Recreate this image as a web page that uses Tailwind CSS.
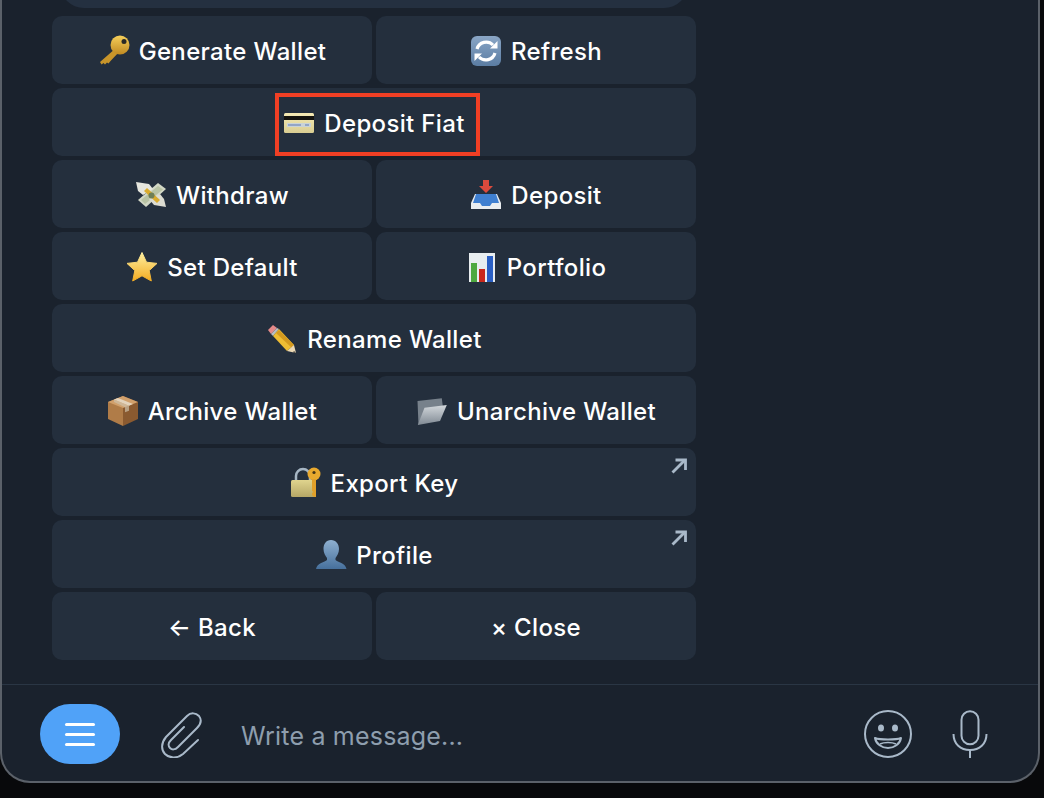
<!DOCTYPE html>
<html lang="en">
<head>
  <meta charset="UTF-8" />
  <title>Wallet menu</title>
  <script src="https://cdn.jsdelivr.net/npm/@tailwindcss/browser@4"></script>
</head>
<body class="bg-black">
  <div class="w-[1044px] h-[798px] overflow-hidden bg-[#08090b] font-['Inter','Liberation_Sans',sans-serif]">
    <!-- telegram window -->
    <div class="w-[1040px] h-[783px] flex flex-col bg-[#1a222d] border-l-2 border-r-2 border-b-2 border-[#5b6169] rounded-b-[30px] overflow-hidden">

      <!-- keyboard area -->
      <div class="h-[684px] pl-[50px] w-[694px] shrink-0">
        <div class="h-[40px] -mt-[32px] mb-[8px] mx-[8px] bg-[#243040] rounded-b-[24px]"></div>

        <div class="grid grid-cols-2 gap-[4px] text-white text-[24px] font-medium leading-none tracking-[0.34px]">
          <!-- Generate Wallet / Refresh -->
          <button class="h-[68px] pt-[4px] rounded-[10px] bg-[#242f3d] flex items-center justify-center gap-[9px]">
            <svg class="w-[32px] h-[32px] mb-[2px]" viewBox="0 0 32 32">
              <defs><linearGradient id="keyBg" x1="0" y1="0" x2="0" y2="1"><stop offset="0" stop-color="#f6cf5a"/><stop offset="1" stop-color="#c08a22"/></linearGradient></defs>
              <path d="M18 13 2 27l1.500 2.500 2-1.500 1.500 1.500 2-2 1.500 1 2-2.500L21 17z" fill="#c8952a"/>
              <circle cx="22" cy="10" r="9.500" fill="url(#keyBg)"/>
              <circle cx="26" cy="6.500" r="2.500" fill="#2a2a26"/>
            </svg>
            <span>Generate Wallet</span>
          </button>
          <button class="h-[68px] pt-[4px] rounded-[10px] bg-[#242f3d] flex items-center justify-center gap-[9px]">
            <svg class="w-[32px] h-[32px] mb-[2px]" viewBox="0 0 32 32">
              <defs><linearGradient id="refreshBg" x1="0" y1="0" x2="0" y2="1"><stop offset="0" stop-color="#8aa6c6"/><stop offset="1" stop-color="#5b7da3"/></linearGradient></defs>
              <rect x="1" y="1" width="30" height="30" rx="6" fill="url(#refreshBg)"/>
              <path d="M7 14a9.500 9.500 0 0 1 16-4" fill="none" stroke="#fff" stroke-width="3.200"/>
              <path d="M20 13.500h7.500V6z" fill="#fff"/>
              <path d="M25 18a9.500 9.500 0 0 1-16 4" fill="none" stroke="#fff" stroke-width="3.200"/>
              <path d="M12 18.500H4.500V26z" fill="#fff"/>
            </svg>
            <span>Refresh</span>
          </button>

          <!-- Deposit Fiat, highlighted with a red box -->
          <button class="relative col-span-2 h-[68px] pt-[4px] rounded-[10px] bg-[#242f3d] flex items-center justify-center gap-[9px]">
            <svg class="w-[32px] h-[32px] mb-[2px]" viewBox="0 0 32 32">
              <defs><linearGradient id="cardBg" x1="0" y1="0" x2="0" y2="1"><stop offset="0" stop-color="#f5eab4"/><stop offset="1" stop-color="#d9cd92"/></linearGradient></defs>
              <rect x="1" y="6" width="30" height="20" rx="1.500" fill="url(#cardBg)"/>
              <rect x="1" y="9" width="30" height="4" fill="#15140f"/>
              <rect x="4" y="16" width="24" height="4" fill="#c9d3d8"/>
              <path d="M5 18h13M22 18h4" stroke="#5e78b4" stroke-width="1.200"/>
            </svg>
            <span>Deposit Fiat</span>
            <span class="absolute left-[223px] top-[5px] w-[205px] h-[63px] border-[4px] border-[#f13f24]"></span>
          </button>

          <!-- Withdraw / Deposit -->
          <button class="h-[68px] pt-[4px] rounded-[10px] bg-[#242f3d] flex items-center justify-center gap-[9px]">
            <svg class="w-[32px] h-[32px] mb-[2px]" viewBox="0 0 32 32">
              <path d="M3 21 23 4l8 6-20 18z" fill="#d3d8c6"/>
              <path d="M6 21 23 7l5 3.500L10 25z" fill="#b9c3a4"/>
              <path d="M1 3l13 2 4 5-10 6-5-4z" fill="#e6e6de"/>
              <path d="M31 28l-12-2-5-6 11-5 4 5z" fill="#dcdcd2"/>
              <path d="M9 12l13 12 3-3L12 9z" fill="#d9ab2e"/>
              <circle cx="16.500" cy="16.500" r="3" fill="#6f7f55"/>
            </svg>
            <span>Withdraw</span>
          </button>
          <button class="h-[68px] pt-[4px] rounded-[10px] bg-[#242f3d] flex items-center justify-center gap-[9px]">
            <svg class="w-[32px] h-[32px] mb-[2px]" viewBox="0 0 32 32">
              <path d="M5 15h22l4 9v6H1v-6z" fill="#e9edf0"/>
              <path d="M6 15h20l3 9h-7l-2 3h-8l-2-3H3z" fill="#3f7fd0"/>
              <path d="M13 1h6v6h4l-7 7-7-7h4z" fill="#dc4a3d"/>
            </svg>
            <span>Deposit</span>
          </button>

          <!-- Set Default / Portfolio -->
          <button class="h-[68px] pt-[4px] rounded-[10px] bg-[#242f3d] flex items-center justify-center gap-[9px]">
            <svg class="w-[32px] h-[32px] mb-[2px]" viewBox="0 0 32 32">
              <defs><linearGradient id="starBg" x1="0" y1="0" x2="0" y2="1"><stop offset="0" stop-color="#fff0a0"/><stop offset="1" stop-color="#f2ab22"/></linearGradient></defs>
              <path d="M16 1.500l4.500 9.700 10.500 1.200-7.800 7.200 2.100 10.400L16 24.800 6.700 30l2.100-10.400L1 12.400l10.500-1.200z" fill="url(#starBg)" stroke="url(#starBg)" stroke-width="1" stroke-linejoin="round"/>
            </svg>
            <span>Set Default</span>
          </button>
          <button class="h-[68px] pt-[4px] rounded-[10px] bg-[#242f3d] flex items-center justify-center gap-[9px]">
            <svg class="w-[32px] h-[32px] mb-[2px]" viewBox="0 0 32 32">
              <rect x="3" y="2" width="26" height="29" fill="#e8edf0"/>
              <rect x="5" y="12" width="6" height="19" fill="#4da83f"/>
              <rect x="13" y="18" width="6" height="13" fill="#c9281c"/>
              <rect x="21" y="5" width="6" height="26" fill="#2a5fc4"/>
            </svg>
            <span>Portfolio</span>
          </button>

          <!-- Rename Wallet -->
          <button class="col-span-2 h-[68px] pt-[4px] rounded-[10px] bg-[#242f3d] flex items-center justify-center gap-[9px]">
            <svg class="w-[32px] h-[32px] mb-[2px]" viewBox="0 0 32 32">
              <path d="M2 7l5-5 4 3-6 6z" fill="#e58a8a"/>
              <path d="M5 11l6-6 2 1-6 7z" fill="#b9bec4"/>
              <path d="M7 13l6-7 15 16-7 6z" fill="#efbd33"/>
              <path d="M10 10l3-3 15 15-2 3z" fill="#d49a1f"/>
              <path d="M21 28l7-6 2 8z" fill="#ecd9b4"/>
              <path d="M28 28l2 2-3-.500z" fill="#333"/>
            </svg>
            <span>Rename Wallet</span>
          </button>

          <!-- Archive / Unarchive -->
          <button class="h-[68px] pt-[4px] rounded-[10px] bg-[#242f3d] flex items-center justify-center gap-[9px]">
            <svg class="w-[32px] h-[32px] mb-[2px]" viewBox="0 0 32 32">
              <path d="M16 1 31 7v17L16 31z" fill="#8a5a30"/>
              <path d="M16 1 1 7v17l15 7z" fill="#b07c48"/>
              <path d="M1 7l15 6 15-6-15-6z" fill="#d1a06c"/>
              <path d="M7 4.500l15 6.200 4-1.600L11 3z" fill="#e3d3bc"/>
              <path d="M7 4.500l15 6.200v5l-4 1.500v-5L7 7z" fill="#cdbfa8" opacity=".7"/>
            </svg>
            <span>Archive Wallet</span>
          </button>
          <button class="h-[68px] pt-[4px] rounded-[10px] bg-[#242f3d] flex items-center justify-center gap-[9px]">
            <svg class="w-[32px] h-[32px] mb-[2px]" viewBox="0 0 32 32">
              <defs><linearGradient id="folderBg" x1="0" y1="0" x2="0" y2="1"><stop offset="0" stop-color="#d3d8dc"/><stop offset="1" stop-color="#7f8993"/></linearGradient></defs>
              <path d="M1.500 6l24.300-2.700 1 8L6 26 2.500 30z" fill="#77818b"/>
              <path d="M8.500 12.700 30.800 10 24 26 1.800 30z" fill="url(#folderBg)"/>
            </svg>
            <span>Unarchive Wallet</span>
          </button>

          <!-- Export Key -->
          <button class="relative col-span-2 h-[68px] pt-[4px] rounded-[10px] bg-[#242f3d] flex items-center justify-center gap-[9px]">
            <svg class="w-[32px] h-[32px] mb-[2px]" viewBox="0 0 32 32">
              <defs><linearGradient id="lockBg" x1="0" y1="0" x2="0" y2="1"><stop offset="0" stop-color="#e0d48e"/><stop offset="1" stop-color="#b5a766"/></linearGradient></defs>
              <path d="M6 14V9a7 7 0 0 1 14 0v5" fill="none" stroke="#a6b6c4" stroke-width="2.500"/>
              <rect x="1" y="13" width="24" height="17" rx="1.500" fill="url(#lockBg)"/>
              <circle cx="24" cy="7" r="6.500" fill="#e8a92e"/>
              <circle cx="24" cy="5.500" r="1.600" fill="#433416"/>
              <path d="M22 12h4v18h-2l-2-2v-2l1.500-1-1.500-1z" fill="#e0a02a"/>
            </svg>
            <span>Export Key</span>
            <svg class="absolute right-[9px] top-[10px] w-[16px] h-[16px]" viewBox="0 0 16 16" fill="none" stroke="#a9b9c9" stroke-width="2.800">
              <path d="M1.500 14.500 13.500 2.500"/>
              <path d="M4.500 2h10v10"/>
            </svg>
          </button>

          <!-- Profile -->
          <button class="relative col-span-2 h-[68px] pt-[4px] rounded-[10px] bg-[#242f3d] flex items-center justify-center gap-[9px]">
            <svg class="w-[32px] h-[32px] mb-[2px]" viewBox="0 0 32 32">
              <defs><linearGradient id="personBg" x1="0" y1="0" x2="0" y2="1"><stop offset="0" stop-color="#8fb0d0"/><stop offset="1" stop-color="#46709c"/></linearGradient></defs>
              <path d="M16 1c5 0 8 4 8 9 0 4-2 7-3.500 9v2c2 2 10 3 11 9H1c1-6 9-7 11-9v-2c-1.500-2-3.500-5-3.500-9 0-5 2.500-9 7.500-9z" fill="url(#personBg)"/>
            </svg>
            <span>Profile</span>
            <svg class="absolute right-[9px] top-[10px] w-[16px] h-[16px]" viewBox="0 0 16 16" fill="none" stroke="#a9b9c9" stroke-width="2.800">
              <path d="M1.500 14.500 13.500 2.500"/>
              <path d="M4.500 2h10v10"/>
            </svg>
          </button>

          <!-- Back / Close -->
          <button class="h-[68px] pt-[4px] rounded-[10px] bg-[#242f3d] flex items-center justify-center">← Back</button>
          <button class="h-[68px] pt-[4px] rounded-[10px] bg-[#242f3d] flex items-center justify-center">× Close</button>
        </div>
      </div>

      <!-- message input -->
      <div class="flex-1 border-t border-[#2a3644] flex items-center pl-[38px] pr-[50px] pt-[2px]">
        <div class="w-[80px] h-[60px] rounded-[30px] bg-[#50a2f8] flex flex-col items-center justify-center gap-[7px]">
          <span class="w-[30px] h-[3px] rounded-full bg-white"></span>
          <span class="w-[30px] h-[3px] rounded-full bg-white"></span>
          <span class="w-[30px] h-[3px] rounded-full bg-white"></span>
        </div>
        <svg class="ml-[38px] w-[44px] h-[48px]" viewBox="0 0 44 48" fill="none" stroke="#a9b9c9" stroke-width="2" stroke-linecap="round">
          <path d="M40 30 25 44C19 49 11 48 7 44 3 40 3 33 8 27L29 6C33 2 38 3 41 6 44 10 43 14 39 18L20 37C17 40 14 40 12 38 10 36 10 33 13 30L26 17"/>
        </svg>
        <span class="ml-[39px] mt-[4px] text-[25px] leading-none tracking-[0.2px] text-[#8e9eae]">Write a message...</span>
        <svg class="ml-auto w-[48px] h-[48px]" viewBox="0 0 48 48" fill="none" stroke="#a9b9c9" stroke-width="2">
          <circle cx="24" cy="24" r="23"/>
          <ellipse cx="17" cy="18" rx="3" ry="3.500" fill="#a9b9c9" stroke="none"/>
          <ellipse cx="31" cy="18" rx="3" ry="3.500" fill="#a9b9c9" stroke="none"/>
          <path d="M11 28C16 30 32 30 37 28 36 34 30 38 24 38 18 38 12 34 11 28Z" stroke-linejoin="round"/>
          <path d="M16 34C20 32 28 32 32 34" stroke-width="1.600"/>
        </svg>
        <svg class="ml-[40px] w-[36px] h-[48px]" viewBox="0 0 36 48" fill="none" stroke="#a9b9c9" stroke-width="2">
          <rect x="9.500" y="1.200" width="17" height="33" rx="8.500"/>
          <path d="M1.500 24c0 10 7 16 16.500 16S34.500 34 34.500 24"/>
          <path d="M18 40v8"/>
        </svg>
      </div>
    </div>
  </div>
</body>
</html>
